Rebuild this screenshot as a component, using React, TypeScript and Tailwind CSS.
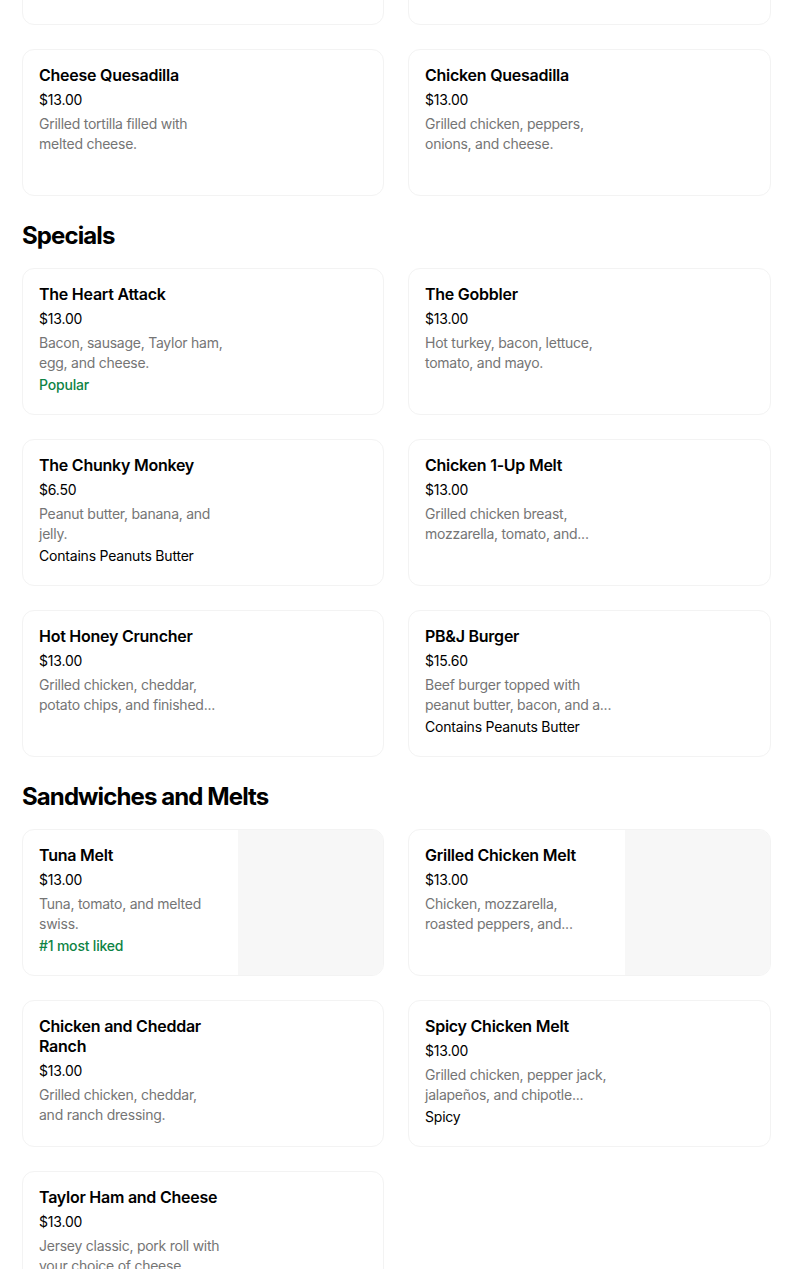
import React from "react";

type Item = {
  title?: string[];
  price?: string;
  desc?: string[];
  tag?: { text: string; green?: boolean };
  image?: boolean;
};

function Card({ item }: { item: Item }) {
  return (
    <div className="relative flex h-[147px] overflow-hidden rounded-xl border border-[#f3f3f3] bg-white">
      <div className="flex-1 pl-4 pt-[15px]">
        {item.title && (
          <div className="text-[16px] font-semibold leading-5 tracking-[-0.25px] text-black">
            {item.title.map((t, i) => (
              <div key={i} className="whitespace-nowrap">
                {t}
              </div>
            ))}
          </div>
        )}
        {item.price && (
          <div className="mt-[5px] text-[14px] leading-5 tracking-[-0.2px] text-black">{item.price}</div>
        )}
        {item.desc && (
          <div className="mt-1 text-[14px] leading-5 tracking-[-0.25px] text-[#757575]">
            {item.desc.map((d, i) => (
              <div key={i} className="whitespace-nowrap">
                {d}
              </div>
            ))}
          </div>
        )}
        {item.tag && (
          <div
            className={
              item.tag.green
                ? "mt-[2px] text-[14px] font-medium leading-5 tracking-[-0.2px] text-[#0e8345]"
                : "mt-[2px] text-[14px] leading-5 tracking-[-0.2px] text-black"
            }
          >
            {item.tag.text}
          </div>
        )}
      </div>
      {item.image && <div className="h-full w-[145px] shrink-0 bg-[#f7f7f7]" />}
    </div>
  );
}

function Grid({ items }: { items: Item[] }) {
  return (
    <div className="grid grid-cols-[362px_363px] gap-6">
      {items.map((it, i) => (
        <Card key={i} item={it} />
      ))}
    </div>
  );
}

function Heading({ children }: { children: React.ReactNode }) {
  return (
    <h2 className="mb-4 mt-6 text-[24px] font-bold leading-8 tracking-[-0.9px] text-black">
      {children}
    </h2>
  );
}

export default function App() {
  const first: Item[] = [
    {},
    {},
    {
      title: ["Cheese Quesadilla"],
      price: "$13.00",
      desc: ["Grilled tortilla filled with", "melted cheese."],
    },
    {
      title: ["Chicken Quesadilla"],
      price: "$13.00",
      desc: ["Grilled chicken, peppers,", "onions, and cheese."],
    },
  ];
  const specials: Item[] = [
    {
      title: ["The Heart Attack"],
      price: "$13.00",
      desc: ["Bacon, sausage, Taylor ham,", "egg, and cheese."],
      tag: { text: "Popular", green: true },
    },
    {
      title: ["The Gobbler"],
      price: "$13.00",
      desc: ["Hot turkey, bacon, lettuce,", "tomato, and mayo."],
    },
    {
      title: ["The Chunky Monkey"],
      price: "$6.50",
      desc: ["Peanut butter, banana, and", "jelly."],
      tag: { text: "Contains Peanuts Butter" },
    },
    {
      title: ["Chicken 1-Up Melt"],
      price: "$13.00",
      desc: ["Grilled chicken breast,", "mozzarella, tomato, and..."],
    },
    {
      title: ["Hot Honey Cruncher"],
      price: "$13.00",
      desc: ["Grilled chicken, cheddar,", "potato chips, and finished..."],
    },
    {
      title: ["PB&J Burger"],
      price: "$15.60",
      desc: ["Beef burger topped with", "peanut butter, bacon, and a..."],
      tag: { text: "Contains Peanuts Butter" },
    },
  ];
  const sandwiches: Item[] = [
    {
      title: ["Tuna Melt"],
      price: "$13.00",
      desc: ["Tuna, tomato, and melted", "swiss."],
      tag: { text: "#1 most liked", green: true },
      image: true,
    },
    {
      title: ["Grilled Chicken Melt"],
      price: "$13.00",
      desc: ["Chicken, mozzarella,", "roasted peppers, and..."],
      image: true,
    },
    {
      title: ["Chicken and Cheddar", "Ranch"],
      price: "$13.00",
      desc: ["Grilled chicken, cheddar,", "and ranch dressing."],
    },
    {
      title: ["Spicy Chicken Melt"],
      price: "$13.00",
      desc: ["Grilled chicken, pepper jack,", "jalapeños, and chipotle..."],
      tag: { text: "Spicy" },
    },
    {
      title: ["Taylor Ham and Cheese"],
      price: "$13.00",
      desc: ["Jersey classic, pork roll with", "your choice of cheese."],
    },
  ];

  return (
    <div
      className="h-[1269px] w-[804px] overflow-hidden bg-white"
      style={{ fontFamily: "Inter, 'Liberation Sans', sans-serif" }}
    >
      <div className="-mt-[122px] ml-[22px] w-[749px]">
        <Grid items={first} />
        <Heading>Specials</Heading>
        <Grid items={specials} />
        <Heading>Sandwiches and Melts</Heading>
        <Grid items={sandwiches} />
      </div>
    </div>
  );
}
